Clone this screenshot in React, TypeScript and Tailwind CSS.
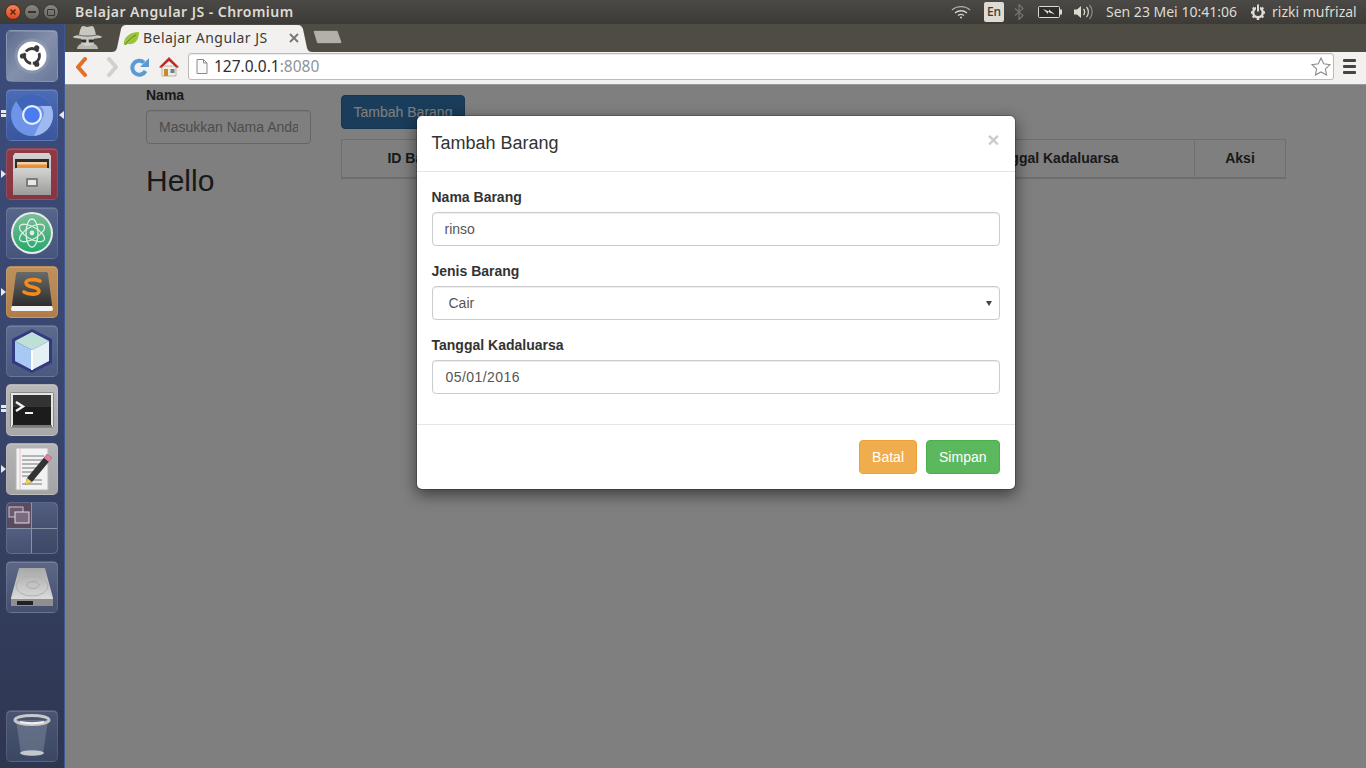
import React from 'react';

const uiFont = 'font-["Noto_Sans",sans-serif]';

function WindowButton({ className, children }: { className: string; children: React.ReactNode }) {
  return (
    <div className={`w-[16px] h-[16px] rounded-full flex items-center justify-center ${className}`}>
      {children}
    </div>
  );
}

function TopBar() {
  return (
    <header className={`h-[24px] shrink-0 flex items-center bg-gradient-to-b from-[#4a4945] to-[#3c3b37] text-[#dfdbd2] ${uiFont}`}>
      <div className="flex items-center gap-[3px] pl-[5px] w-[75px]">
        <WindowButton className="bg-gradient-to-b from-[#f4855a] to-[#d9481c] border border-[#5a2a18]">
          <svg width="8" height="8" viewBox="0 0 8 8"><path d="M1.5 1.5l5 5M6.5 1.5l-5 5" stroke="#5b1f0a" strokeWidth="1.4" /></svg>
        </WindowButton>
        <WindowButton className="bg-gradient-to-b from-[#8a8780] to-[#66645e] border border-[#3c3b37]">
          <div className="w-[8px] h-[1.5px] bg-[#35342f]" />
        </WindowButton>
        <WindowButton className="bg-gradient-to-b from-[#8a8780] to-[#66645e] border border-[#3c3b37]">
          <div className="w-[8px] h-[7px] border border-[#35342f] rounded-[1px]" />
        </WindowButton>
      </div>
      <span className="text-[14px] font-semibold tracking-[0.46px] leading-none">Belajar Angular JS - Chromium</span>
      <div className="ml-auto flex items-center">
        <svg width="20" height="14" viewBox="0 0 20 14" className="mr-[13px]" fill="none" stroke="#d8d4cb" strokeWidth="1.3">
          <path d="M1 5c5-4.500 13-4.500 18 0" opacity="0.75" />
          <path d="M4 8c3.500-3 8.500-3 12 0" />
          <path d="M7 10.500c2-1.500 4-1.500 6 0" />
          <circle cx="10" cy="12.500" r="1" fill="#d8d4cb" stroke="none" />
        </svg>
        <div className="w-[20px] h-[20px] rounded-[2px] bg-[#dfdbd2] text-[#3c3b37] text-[12px] font-medium flex items-center justify-center mr-[10px]">En</div>
        <svg width="10" height="16" viewBox="0 0 10 16" className="mr-[14px]" fill="none" stroke="#77756f" strokeWidth="1.2">
          <path d="M1 4.500l8 7-4 4V.500l4 4-8 7" />
        </svg>
        <svg width="24" height="12" viewBox="0 0 24 12" className="mr-[12px]">
          <rect x="0.500" y="0.500" width="21" height="11" rx="1" fill="#2f2e2a" stroke="#dfdbd2" />
          <rect x="22" y="3.500" width="2" height="5" fill="#dfdbd2" />
          <path d="M5 3l6 2.500 0-2 6 5-7-2.500 0 2z" fill="#dfdbd2" />
        </svg>
        <svg width="20" height="16" viewBox="0 0 20 16" className="mr-[12px]" fill="none">
          <path d="M0 5.500h3l4-3.500v12l-4-3.500H0z" fill="#dfdbd2" />
          <path d="M9.500 5c1.500 1.500 1.500 4.500 0 6" stroke="#dfdbd2" strokeWidth="1.3" />
          <path d="M12.500 3c2.500 2.500 2.500 7.500 0 10" stroke="#dfdbd2" strokeWidth="1.2" />
          <path d="M15.500 1c3.500 4 3.500 10 0 14" stroke="#8f8c85" strokeWidth="1.2" />
        </svg>
        <span className="text-[14px] leading-none w-[144px] whitespace-nowrap">Sen 23 Mei 10:41:06</span>
        <svg width="16" height="16" viewBox="0 0 16 16" className="mr-[6px]" fill="none" stroke="#dfdbd2">
          <circle cx="8" cy="8.500" r="4.800" strokeWidth="2.400" />
          <path d="M1 8.500h2.500M12.500 8.500H15M2.800 3.500l1.800 1.800M13.200 3.500l-1.800 1.800M2.800 13.500l1.800-1.800M13.200 13.500l-1.800-1.800M8 13v3" strokeWidth="2.400" />
          <path d="M8 1v7" stroke="#3f3e3a" strokeWidth="4" />
          <path d="M8 .500v7" strokeWidth="2" />
        </svg>
        <span className="text-[14px] leading-none w-[94px] whitespace-nowrap">rizki mufrizal</span>
      </div>
    </header>
  );
}

function TabStrip() {
  return (
    <div className={`h-[28px] shrink-0 bg-[#4f4c44] flex items-end pl-[5px] ${uiFont}`}>
      <svg width="35" height="24" viewBox="0 0 35 24" className="shrink-0 self-start mt-[1px]">
        <path d="M7 24c0-3 3-5 5-6h11c2 1 5 3 5 6z" fill="#b9b7b1" />
        <path d="M11 12h13v5c0 2-3 4-6.500 4S11 19 11 17z" fill="#d0cec8" />
        <path d="M9 10c1-5 2-9 4-9 2 0 3 1 4.500 1S20 1 22 1c2 0 3 4 4 9 4 .500 6 1.300 6 2 0 1-6 1.800-14.500 1.800S3 13 3 12c0-.700 2-1.500 6-2z" fill="#c9c7c1" />
        <path d="M8 10c5 1.500 14 1.500 19 0" stroke="#77756f" strokeWidth="1.200" fill="none" />
        <path d="M10.500 14.500h6l-.500 3h-4.500zM18.500 14.500h6l-1 3H19z" fill="#33322e" />
      </svg>
      <div className="relative w-[200px] h-[28px] ml-[7px] shrink-0 flex items-center">
        <svg width="200" height="28" viewBox="0 0 200 28" className="absolute inset-0">
          <path d="M0 28c2 0 4-1 5-4l4-19c.500-2 2-4 5-4h172c3 0 4 2 5 4l4 19c1 3 3 4 5 4z" fill="#f2f1f0" />
        </svg>
        <svg width="17" height="15" viewBox="0 0 17 15" className="relative ml-[11px]">
          <path d="M1 14C0 7 6 1 16 1c0 8-4 13-11 12z" fill="#9cc43a" />
          <path d="M2 14C5 9 9 6 13 4" stroke="#5f8a1e" strokeWidth="1" fill="none" />
        </svg>
        <span className="relative ml-[3px] text-[14px] tracking-[0.44px] leading-none text-[#3c3b37] whitespace-nowrap">Belajar Angular JS</span>
        <svg width="10" height="10" viewBox="0 0 10 10" className="absolute left-[177px] top-[9px]">
          <path d="M1 1l8 8M9 1l-8 8" stroke="#77756f" strokeWidth="1.800" />
        </svg>
      </div>
      <svg width="32" height="16" viewBox="0 0 32 16" className="shrink-0 mb-[7px] -ml-[1px]">
        <path d="M4 1.500c-1 0-2 .500-1.500 1.500l3 10c.300 1 1 1.500 2 1.500h21.500c1.500 0 2-1 1.500-2l-3.500-10c-.300-.700-1-1-2-1z" fill="#b4b0a7" stroke="#3a3832" strokeWidth="0.500" />
      </svg>
    </div>
  );
}

function Toolbar() {
  return (
    <div className={`h-[32px] shrink-0 bg-[#f2f1f0] flex items-center pb-[3px] ${uiFont}`}>
      <svg width="16" height="20" viewBox="0 0 16 20" className="ml-[9px] shrink-0">
        <path d="M11 2L4 10l7 8" fill="none" stroke="#e0702c" strokeWidth="4" strokeLinejoin="round" strokeLinecap="round" />
      </svg>
      <svg width="16" height="20" viewBox="0 0 16 20" className="ml-[14px] shrink-0">
        <path d="M5 2l7 8-7 8" fill="none" stroke="#d2d0cc" strokeWidth="4" strokeLinejoin="round" strokeLinecap="round" />
      </svg>
      <svg width="20" height="20" viewBox="0 0 20 20" className="ml-[10px] shrink-0">
        <path d="M15.500 14A7 7 0 1 1 14 5.500" fill="none" stroke="#5a9bd5" strokeWidth="4" />
        <path d="M19 1v9h-9z" fill="#5a9bd5" />
      </svg>
      <svg width="22" height="21" viewBox="0 0 22 21" className="ml-[8px] shrink-0">
        <path d="M4 10h14v10H4z" fill="#f0ece0" stroke="#a9a493" strokeWidth="0.800" />
        <path d="M1 11L11 1l10 10-2 1-8-7.500L3 12z" fill="#c9302c" />
        <path d="M4 9.500L11 3l7 6.500v1.500L11 5l-7 6z" fill="#b02a26" />
        <path d="M6 13h4v7H6z" fill="#c98a2c" />
        <path d="M12.500 13h4v4h-4z" fill="#6f7f8f" />
      </svg>
      <div className="ml-[8px] w-[1146px] h-[27px] shrink-0 bg-white border border-[#bdbbb6] rounded-[3px] flex items-center shadow-[inset_0_1px_1px_rgba(0,0,0,0.08)]">
        <svg width="12" height="15" viewBox="0 0 12 15" className="ml-[7px] shrink-0">
          <path d="M1 .500h6.500l3.500 3.500v10.500H1z" fill="#fafafa" stroke="#8a8a8a" />
          <path d="M7.500 .500V4H11" fill="none" stroke="#8a8a8a" />
        </svg>
        <span className="ml-[6px] text-[15.500px] leading-none text-[#2e2e2e] whitespace-nowrap">127.0.0.1<span className="text-[#8f9499]">:8080</span></span>
        <svg width="20" height="19" viewBox="0 0 20 19" className="ml-auto mr-[2px] shrink-0">
          <path d="M10 1l2.700 5.800 6.300.800-4.600 4.300 1.200 6.200L10 15l-5.600 3.100 1.200-6.200L1 7.600l6.300-.800z" fill="#fff" stroke="#8d8d8d" strokeWidth="1.100" />
        </svg>
      </div>
      <div className="ml-[9px] w-[13px] flex flex-col gap-[3px] shrink-0">
        <div className="h-[3px] bg-[#444] rounded-[1px]" />
        <div className="h-[3px] bg-[#444] rounded-[1px]" />
        <div className="h-[3px] bg-[#444] rounded-[1px]" />
      </div>
    </div>
  );
}

function Tile({ className, children }: { className: string; children: React.ReactNode }) {
  return (
    <div className={`relative w-[52px] h-[52px] rounded-[5px] border border-white/10 flex items-center justify-center shadow-[inset_0_1px_0_rgba(255,255,255,0.15)] ${className}`}>
      {children}
    </div>
  );
}

const Pip = () => (
  <div className="absolute -left-[6px] top-[21px] w-0 h-0 border-y-[4px] border-y-transparent border-l-[5px] border-l-[#e8e8e8]" />
);

const DoublePip = () => (
  <div className="absolute -left-[6px] top-[20px] flex flex-col gap-[1px]">
    <div className="w-[5px] h-[3px] bg-[#e8e8e8]" />
    <div className="w-[5px] h-[3px] bg-[#e8e8e8]" />
  </div>
);

function Launcher() {
  return (
    <aside className="relative w-[65px] shrink-0 bg-gradient-to-b from-[#3b4c7c] via-[#39456c] to-[#2e3650] border-r border-[#3e5a94] flex flex-col items-center pt-[6px] pr-[1px]">
      <div className="flex flex-col gap-[7px]">
        <Tile className="bg-gradient-to-br from-[#5d6b8c] via-[#8591ab] to-[#69779a]">
          <svg width="36" height="36" viewBox="0 0 36 36">
            <circle cx="18" cy="18" r="17.500" fill="#9aa4ba" opacity="0.45" />
            <circle cx="18" cy="18" r="14.500" fill="#fff" />
            <circle cx="18" cy="18" r="7.500" fill="none" stroke="#3a3a3a" strokeWidth="2.800" />
            <path d="M18 18L9 13M18 18L27 13M18 18v10" stroke="#fff" strokeWidth="1.600" />
            <circle cx="8.500" cy="18" r="2.600" fill="#3a3a3a" />
            <circle cx="22.700" cy="9.800" r="2.600" fill="#3a3a3a" />
            <circle cx="22.700" cy="26.200" r="2.600" fill="#3a3a3a" />
          </svg>
        </Tile>
        <Tile className="bg-gradient-to-b from-[#4b6cb5] to-[#3a569c]">
          <svg width="44" height="44" viewBox="0 0 44 44">
            <circle cx="22" cy="22" r="21" fill="#6d94e8" />
            <path d="M22 1a21 21 0 0 1 19 12H22a9 9 0 0 0-9 6L6 8a21 21 0 0 1 16-7z" fill="#3f64b8" />
            <path d="M41 13a21 21 0 0 1-17 30l8-17a9 9 0 0 0-2-13z" fill="#9db9f0" />
            <circle cx="22" cy="22" r="10" fill="#e8effc" />
            <circle cx="22" cy="22" r="7.800" fill="#4a7df0" />
          </svg>
          <DoublePip />
          <div className="absolute -right-[7px] top-[21px] w-0 h-0 border-y-[4px] border-y-transparent border-r-[5px] border-r-[#e8e8e8]" />
        </Tile>
        <Tile className="bg-gradient-to-b from-[#8f3b47] to-[#863643]">
          <svg width="42" height="44" viewBox="0 0 42 44">
            <defs>
              <linearGradient id="cab" x1="0" y1="0" x2="0" y2="1">
                <stop offset="0" stopColor="#d4d4d2" />
                <stop offset="1" stopColor="#9c9c9a" />
              </linearGradient>
            </defs>
            <path d="M2 4l2-3h34l2 3v39H2z" fill="url(#cab)" />
            <path d="M4 7h34v12H4z" fill="#2c2c2c" />
            <path d="M6 10h30v7H6z" fill="#e89040" />
            <path d="M6 10h30v2.500H6z" fill="#f6d0a0" />
            <path d="M2 17l3-1h32l3 1v26H2z" fill="url(#cab)" />
            <rect x="15" y="26" width="12" height="9" rx="1" fill="#7c7c7a" />
            <rect x="17" y="28" width="8" height="5" fill="#e8e8e6" />
          </svg>
          <Pip />
        </Tile>
        <Tile className="bg-gradient-to-b from-[#56658a] to-[#46557e]">
          <svg width="44" height="44" viewBox="0 0 44 44">
            <defs>
              <linearGradient id="atom" x1="0" y1="0" x2="0" y2="1">
                <stop offset="0" stopColor="#7cbd98" />
                <stop offset="1" stopColor="#25a86c" />
              </linearGradient>
            </defs>
            <circle cx="22" cy="22" r="21" fill="#e8ece8" />
            <circle cx="22" cy="22" r="19" fill="url(#atom)" />
            <g fill="none" stroke="#dcefe4" strokeWidth="1.300">
              <ellipse cx="22" cy="22" rx="14" ry="6" transform="rotate(30 22 22)" />
              <ellipse cx="22" cy="22" rx="14" ry="6" transform="rotate(-30 22 22)" />
              <ellipse cx="22" cy="22" rx="14" ry="6" transform="rotate(90 22 22)" />
            </g>
            <circle cx="22" cy="22" r="2.400" fill="#dcefe4" />
          </svg>
        </Tile>
        <Tile className="bg-gradient-to-b from-[#bd905c] to-[#b07d48]">
          <svg width="46" height="46" viewBox="0 0 46 46">
            <defs>
              <linearGradient id="subl" x1="0" y1="0" x2="0" y2="1">
                <stop offset="0" stopColor="#6a6a6a" />
                <stop offset="1" stopColor="#2a2a2a" />
              </linearGradient>
            </defs>
            <path d="M9 3c-1 0-2 .500-2 2L3 36c0 2 1 3 3 3h34c2 0 3-1 3-3L39 5c0-1.500-1-2-2-2z" fill="url(#subl)" />
            <path d="M3 37h40l1 3c0 1-1 2-2 2H4c-1 0-2-1-2-2z" fill="#f2f2f2" />
            <path d="M31 12c-5-2-14-2-14 2 0 5 13 3 13 8 0 4-10 4-15 1" fill="none" stroke="#f28a1c" strokeWidth="3.600" strokeLinecap="round" />
          </svg>
          <Pip />
        </Tile>
        <Tile className="bg-gradient-to-b from-[#5b6a8e] to-[#4a5980]">
          <svg width="44" height="46" viewBox="0 0 44 46">
            <path d="M22 1l20 10v24L22 45 2 35V11z" fill="#343a80" />
            <path d="M22 4l17 9-17 9-17-9z" fill="#bfe0d8" />
            <path d="M5 13l17 9v20L5 33z" fill="#a9c8f4" />
            <path d="M39 13l-17 9v20l17-9z" fill="#e4f0f4" />
            <path d="M22 22v20" stroke="#fff" strokeWidth="2" />
          </svg>
        </Tile>
        <Tile className="bg-gradient-to-b from-[#b8b8b8] to-[#a8a8a8]">
          <svg width="44" height="36" viewBox="0 0 44 36">
            <rect x="0.500" y="0.500" width="43" height="35" rx="1" fill="#e6e6e6" stroke="#888" />
            <rect x="3" y="3" width="38" height="30" fill="#1c1c1c" />
            <rect x="3" y="3" width="38" height="12" fill="#333" />
            <path d="M6 10l7 4.500-7 4.500" fill="none" stroke="#f2f2f2" strokeWidth="2.400" />
            <path d="M15 21h8" stroke="#f2f2f2" strokeWidth="2" />
            <path d="M2 34h40" stroke="#555" strokeWidth="1.500" />
          </svg>
          <DoublePip />
        </Tile>
        <Tile className="bg-gradient-to-b from-[#b4b4b4] to-[#a4a4a4]">
          <svg width="44" height="46" viewBox="0 0 44 46">
            <path d="M6 2h32v42H6z" fill="#f2f2f4" stroke="#b5b5b5" />
            <path d="M10 2v42" stroke="#e8b0b0" strokeWidth="0.700" />
            <path d="M12 10h22M12 14h22M12 18h20M12 22h16M12 26h14M12 30h8M18 34h14M12 38h20" stroke="#777" strokeWidth="1" />
            <path d="M37 8l5 4-20 24-7 3 2-7z" fill="#333" />
            <path d="M37 8l5 4-3 4-5-4z" fill="#e87aa8" />
            <path d="M15 39l2-7 5 4z" fill="#f0d24a" />
          </svg>
          <Pip />
        </Tile>
        <Tile className="bg-gradient-to-b from-[#4e5b7c] to-[#4a5778] overflow-hidden">
          <div className="w-full h-full grid grid-cols-2 grid-rows-2 gap-px bg-white/35">
            <div className="bg-[#5b4a60] flex items-center justify-center">
              <svg width="22" height="18" viewBox="0 0 22 18">
                <rect x="1" y="1" width="14" height="10" fill="#6a5a72" stroke="#c9c5cc" />
                <rect x="7" y="6" width="14" height="11" fill="#7b6a80" stroke="#e2dfe4" />
              </svg>
            </div>
            <div className="bg-gradient-to-b from-[#525f80] to-[#46506f]" />
            <div className="bg-gradient-to-b from-[#525f80] to-[#46506f]" />
            <div className="bg-gradient-to-b from-[#46506f] to-[#3e4866]" />
          </div>
        </Tile>
        <Tile className="bg-gradient-to-b from-[#5d6785] to-[#454f70]">
          <svg width="46" height="42" viewBox="0 0 46 42">
            <defs>
              <linearGradient id="disk" x1="0" y1="0" x2="0" y2="1">
                <stop offset="0" stopColor="#a8a8a8" />
                <stop offset="1" stopColor="#e6e6e6" />
              </linearGradient>
            </defs>
            <path d="M10 2h26l8 30v6a2 2 0 0 1-2 2H4a2 2 0 0 1-2-2v-6z" fill="url(#disk)" />
            <path d="M2 33h42v5a2 2 0 0 1-2 2H4a2 2 0 0 1-2-2z" fill="#8f8f8f" />
            <path d="M8 35h16v4H8z" fill="#222" />
            <ellipse cx="23" cy="20" rx="16" ry="10" fill="none" stroke="#b0b0b0" />
            <ellipse cx="24" cy="19" rx="6" ry="3.500" fill="none" stroke="#a8a8a8" />
          </svg>
        </Tile>
      </div>
      <div className="mt-auto mb-[6px]">
        <Tile className="bg-gradient-to-b from-[#4a5572] to-[#3c4763]">
          <svg width="40" height="44" viewBox="0 0 40 44">
            <path d="M4 6l5 34c3 2 19 2 22 0l5-34z" fill="#8f98ac" opacity="0.4" />
            <ellipse cx="20" cy="6" rx="17" ry="4.500" fill="none" stroke="#c8c8c8" strokeWidth="3" />
            <path d="M8 8c6 1.500 18 1.500 24 0" stroke="#f2f2f2" strokeWidth="2" fill="none" />
            <ellipse cx="20" cy="39" rx="12" ry="2.800" fill="#c4c7cc" />
          </svg>
        </Tile>
      </div>
    </aside>
  );
}

function Field({ label, children }: { label: string; children: React.ReactNode }) {
  return (
    <div className="mb-[15px]">
      <label className="block mb-[5px] text-[14px] leading-[20px] font-bold text-[#333]">{label}</label>
      {children}
    </div>
  );
}

const inputClass = 'block w-full h-[34px] px-3 text-[14px] text-[#555] bg-white border border-[#ccc] rounded-[4px] outline-none shadow-[inset_0_1px_1px_rgba(0,0,0,0.075)]';

export default function App() {
  return (
    <div className="w-[1366px] h-[768px] overflow-hidden flex flex-col bg-white font-['Liberation_Sans',Arial,sans-serif] text-[14px] text-[#333]">
      <TopBar />
      <div className="flex-1 flex min-h-0">
        <Launcher />
        <div className="flex-1 min-w-0 flex flex-col">
          <TabStrip />
          <Toolbar />
          <main className="relative flex-1 min-h-0 bg-white border-t border-[#999] flex pl-[81px]">
            <div className="w-[165px] shrink-0">
              <label className="block text-[14px] leading-[20px] font-bold mb-[5px]">Nama</label>
              <input readOnly placeholder="Masukkan Nama Anda" className={`${inputClass} placeholder:text-[#999]`} />
              <h1 className="mt-[20px] text-[30px] leading-[33px] font-normal">Hello</h1>
            </div>
            <div className="ml-[30px] w-[945px] shrink-0 pt-[10px]">
              <button className="block h-[34px] w-[124px] bg-[#337ab7] border border-[#2e6da4] rounded-[4px] text-white text-[14px]">Tambah Barang</button>
              <table className="mt-[10px] w-full table-fixed border-collapse">
                <thead>
                  <tr className="h-[38px]">
                    <th className="w-[158px] border border-[#ddd] border-b-2 font-bold text-center">ID Barang</th>
                    <th className="w-[206px] border border-[#ddd] border-b-2 font-bold text-center">Nama Barang</th>
                    <th className="w-[205px] border border-[#ddd] border-b-2 font-bold text-center">Jenis Barang</th>
                    <th className="border border-[#ddd] border-b-2 font-bold text-center">Tanggal Kadaluarsa</th>
                    <th className="w-[91px] border border-[#ddd] border-b-2 font-bold text-center">Aksi</th>
                  </tr>
                </thead>
              </table>
            </div>
            <div className="absolute inset-0 bg-black/50 flex justify-center items-start pt-[30px]">
              <div className="w-[600px] bg-white bg-clip-padding border border-black/20 rounded-[6px] shadow-[0_5px_15px_rgba(0,0,0,0.5)]">
                <div className="relative h-[56px] px-[15px] pb-[2px] border-b border-[#e5e5e5] flex items-center">
                  <h4 className="text-[18px] leading-none font-normal text-[#333]">Tambah Barang</h4>
                  <span className="absolute right-[15px] top-[13px] text-[21px] leading-none font-bold text-[#000] opacity-20">×</span>
                </div>
                <div className="p-[15px]">
                  <Field label="Nama Barang">
                    <input readOnly value="rinso" className={inputClass} />
                  </Field>
                  <Field label="Jenis Barang">
                    <div className="relative">
                      <select defaultValue="Cair" className={`${inputClass} appearance-none pl-[16px]`}>
                        <option>Cair</option>
                      </select>
                      <div className="absolute right-[8px] top-[15px] w-0 h-0 border-x-[3px] border-x-transparent border-t-[5px] border-t-[#444]" />
                    </div>
                  </Field>
                  <Field label="Tanggal Kadaluarsa">
                    <input readOnly value="05/01/2016" className={`${inputClass} pl-[13px] tracking-[0.45px]`} />
                  </Field>
                </div>
                <div className="p-[15px] border-t border-[#e5e5e5] flex justify-end gap-[9px]">
                  <button className="h-[34px] px-3 bg-[#f0ad4e] border border-[#eea236] rounded-[4px] text-white text-[14px]">Batal</button>
                  <button className="h-[34px] px-3 bg-[#5cb85c] border border-[#4cae4c] rounded-[4px] text-white text-[14px]">Simpan</button>
                </div>
              </div>
            </div>
          </main>
        </div>
      </div>
    </div>
  );
}
